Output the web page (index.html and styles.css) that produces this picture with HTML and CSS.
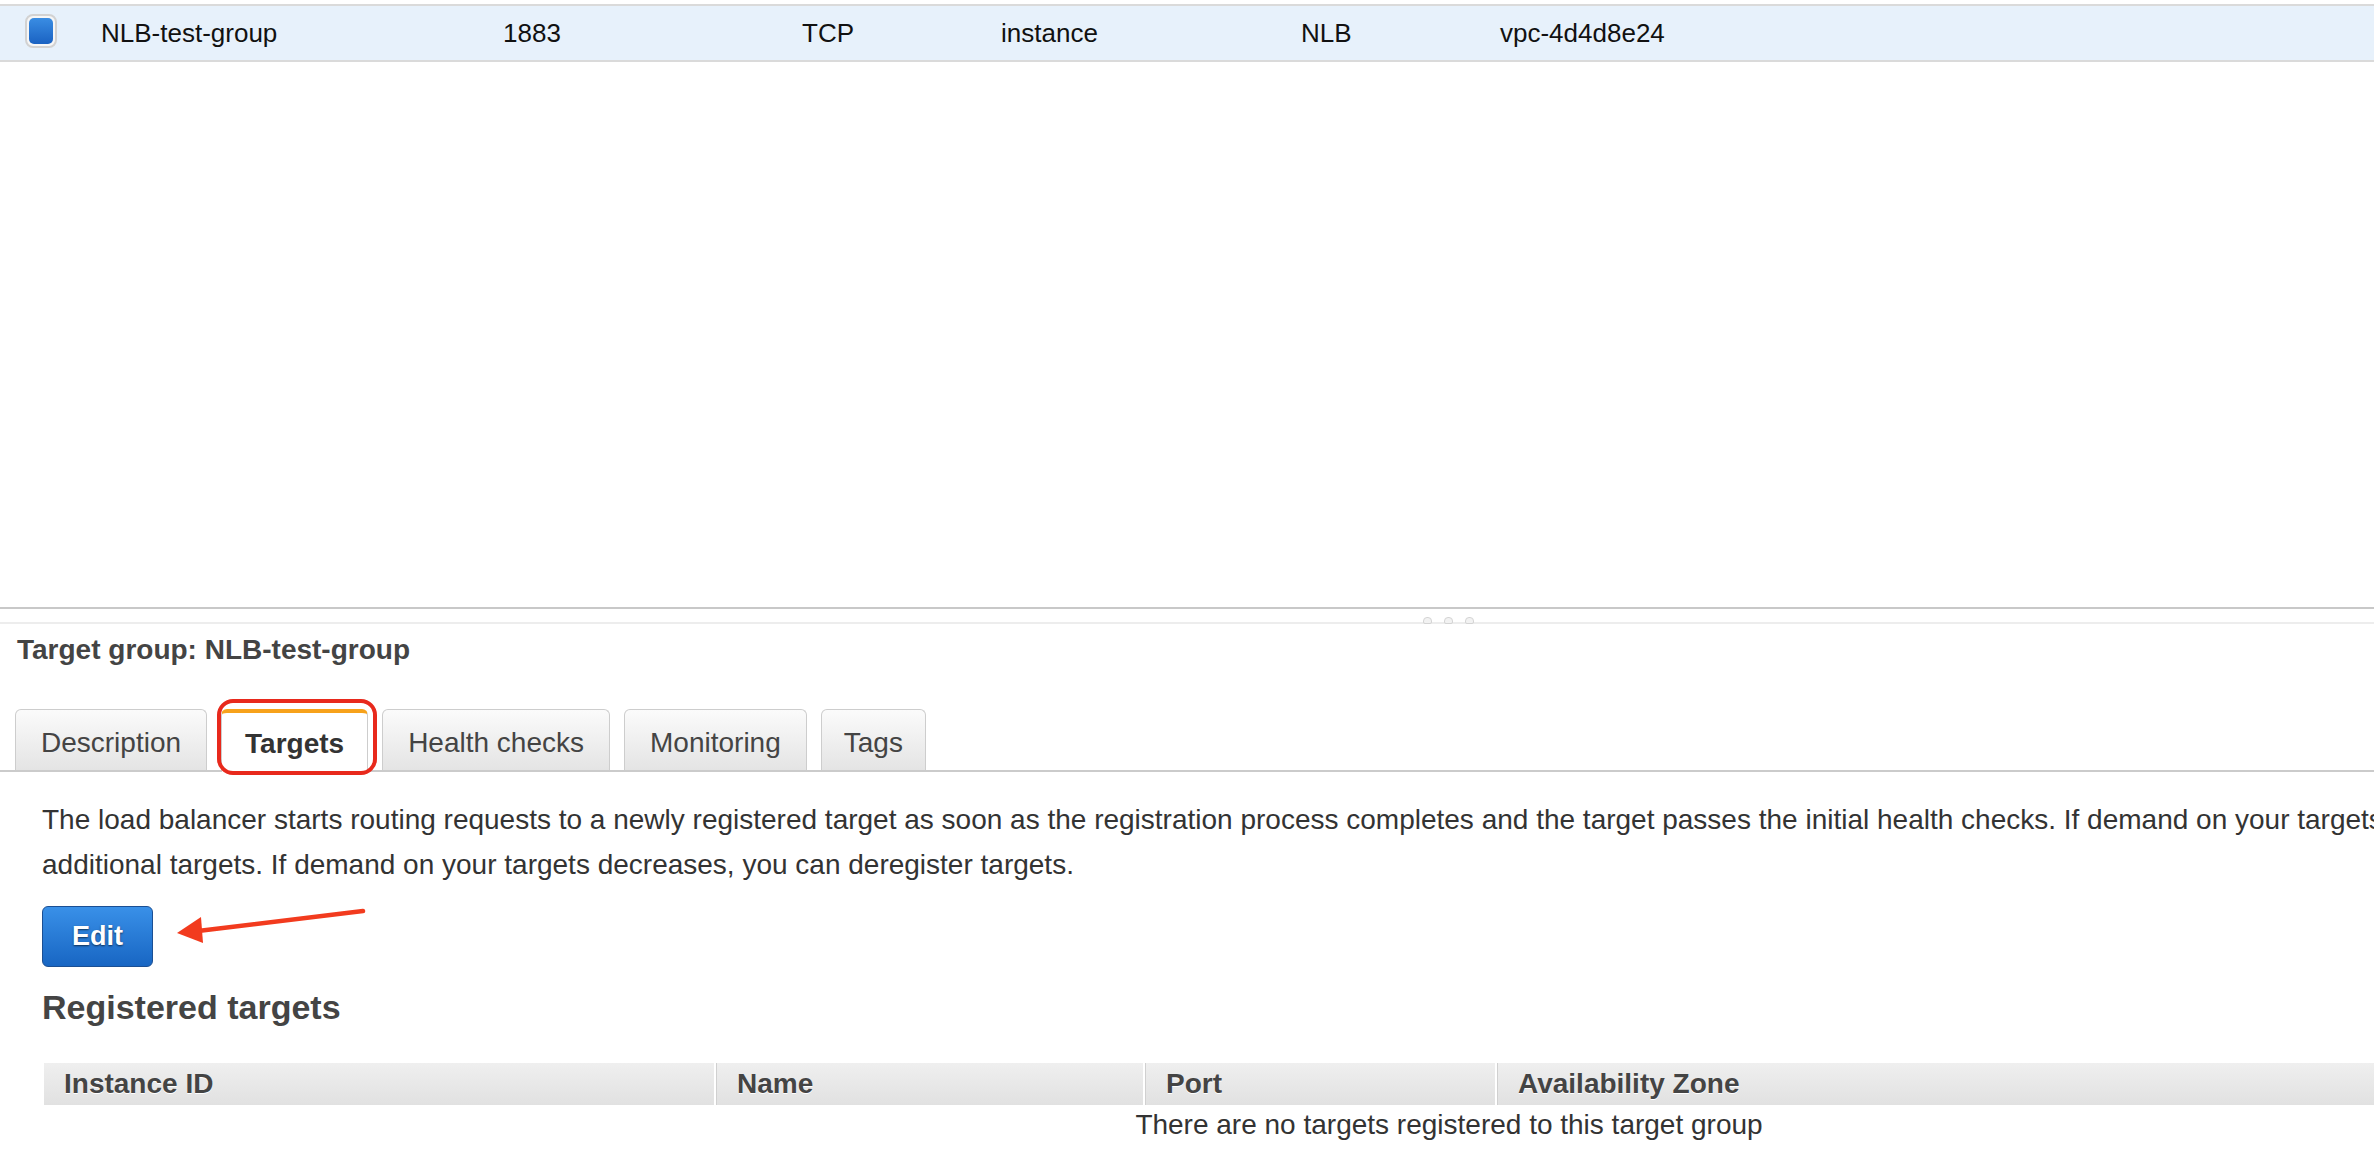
FILE: index.html
```html
<html lang="en">
<head>
  <meta charset="UTF-8">
  <title>Target groups</title>
  <link rel="stylesheet" href="styles.css">
</head>
<body>
  <div class="page">
    <div class="list">
      <div class="row selected">
        <span class="cell check"><span class="checkbox"><span class="checkbox-fill"></span></span></span>
        <span class="cell">NLB-test-group</span>
        <span class="cell">1883</span>
        <span class="cell">TCP</span>
        <span class="cell">instance</span>
        <span class="cell">NLB</span>
        <span class="cell">vpc-4d4d8e24</span>
      </div>
    </div>

    <div class="splitter">
      <span class="grip"><i></i><i></i><i></i></span>
    </div>

    <div class="details">
      <h3 class="details-title">Target group: NLB-test-group</h3>

      <ul class="tabs">
        <li class="tab">Description</li>
        <li class="tab active">Targets</li>
        <li class="tab">Health checks</li>
        <li class="tab">Monitoring</li>
        <li class="tab">Tags</li>
      </ul>

      <div class="tab-body">
        <p class="intro">The load balancer starts routing requests to a newly registered target as soon as the registration process completes and the target passes the initial health checks. If demand on your targets increases, you can register additional targets. If demand on your targets decreases, you can deregister targets.</p>

        <div class="edit-row">
          <button class="btn-primary">Edit</button>
          <svg class="arrow" width="200" height="50" viewBox="0 0 200 50">
            <line x1="193" y1="11" x2="28" y2="31" stroke="#f23b1e" stroke-width="4.5" stroke-linecap="round"/>
            <polygon points="7,33 31,17 33,43" fill="#f23b1e"/>
          </svg>
        </div>

        <h2 class="section-title">Registered targets</h2>

        <table class="targets">
          <thead>
            <tr>
              <th class="col-id">Instance ID</th>
              <th class="col-name">Name</th>
              <th class="col-port">Port</th>
              <th>Availability Zone</th>
            </tr>
          </thead>
          <tbody>
            <tr>
              <td class="empty" colspan="4">There are no targets registered to this target group</td>
            </tr>
          </tbody>
        </table>
      </div>
    </div>
  </div>
</body>
</html>
```

FILE: styles.css
```css
html, body {
  margin: 0;
  overflow: hidden;
  background: #fff;
}
body {
  font-family: "Liberation Sans", Arial, Helvetica, sans-serif;
  color: #333;
}
.page {
  width: 2897px;
}

/* top list */
.list {
  height: 607px;
  padding-top: 4px;
  box-sizing: border-box;
}
.row {
  display: grid;
  grid-template-columns: 101px 402px 299px 199px 300px 199px 1fr;
  align-items: center;
  height: 54px;
  border-top: 2px solid #dadada;
  border-bottom: 2px solid #dadada;
  font-size: 26px;
  color: #111;
}
.row.selected {
  background: #e7f1fb;
}
.cell.check {
  padding-left: 25px;
}
.checkbox {
  display: block;
  width: 32px;
  height: 34px;
  box-sizing: border-box;
  padding: 2px;
  margin-bottom: 4px;
  border: 2px solid #d2d2d2;
  border-radius: 8px;
  background: #f6f6f6;
}
.checkbox-fill {
  display: block;
  height: 100%;
  border-radius: 5px;
  background: linear-gradient(#3a8de3, #1a62c2);
}

/* splitter */
.splitter {
  display: flex;
  justify-content: center;
  align-items: flex-end;
  height: 13px;
  border-top: 2px solid #c8c8c8;
  border-bottom: 2px solid #ededed;
}
.grip {
  display: flex;
  gap: 12px;
  margin-bottom: -2px;
}
.grip i {
  width: 9px;
  height: 7px;
  box-sizing: border-box;
  border: 1px solid #d4d4d4;
  border-radius: 4px 4px 2px 2px;
  background: #f2f2f2;
}

/* details pane */
.details-title {
  margin: 10px 0 0 17px;
  font-size: 28px;
  line-height: 32px;
  font-weight: bold;
  color: #444;
}
.tabs {
  display: flex;
  gap: 14px;
  margin: 43px 0 0;
  padding: 0 0 0 15px;
  list-style: none;
  height: 61px;
  border-bottom: 2px solid #cbcbcb;
}
.tab {
  position: relative;
  display: flex;
  align-items: center;
  box-sizing: border-box;
  height: 61px;
  padding: 6px 25px 0;
  border: 1px solid #cdcdcd;
  border-bottom: none;
  border-radius: 6px 6px 0 0;
  background: linear-gradient(#fbfbfb, #e4e4e4);
  font-size: 28px;
  color: #444;
}
.tab:last-child {
  padding: 6px 22px 0;
}
.tab.active {
  height: 63px;
  margin-bottom: -2px;
  border-top: 4px solid #f7a21b;
  padding: 2px 23px 0;
  background: #fff;
  font-weight: bold;
  color: #333;
}
.tab.active::after {
  content: "";
  position: absolute;
  left: -5px;
  right: -10px;
  top: -14px;
  bottom: -3px;
  border: 4px solid #e8291c;
  border-radius: 16px;
}

.tab-body {
  padding-left: 42px;
}
.intro {
  width: 2760px;
  margin: 25px 0 0;
  font-size: 28px;
  line-height: 45px;
  color: #333;
}
.edit-row {
  position: relative;
  display: flex;
  margin-top: 19px;
}
.btn-primary {
  height: 61px;
  padding: 0 29px;
  border: 1px solid #1b4f93;
  border-radius: 6px;
  background: linear-gradient(#3990e8, #1866c3);
  font-family: inherit;
  font-size: 27px;
  font-weight: bold;
  color: #fff;
  text-shadow: 0 1px 2px rgba(0, 0, 0, 0.6);
  cursor: pointer;
}
.arrow {
  position: absolute;
  left: 128px;
  top: -6px;
}
.section-title {
  margin: 20px 0 0;
  font-size: 34px;
  line-height: 40px;
  font-weight: bold;
  color: #444;
}

/* table */
.targets {
  width: 2810px;
  margin: 36px 0 0 2px;
  border-collapse: collapse;
  table-layout: fixed;
}
.targets th {
  box-sizing: border-box;
  height: 42px;
  padding: 0 0 0 21px;
  text-align: left;
  font-size: 28px;
  font-weight: bold;
  color: #444;
  text-shadow: 0 1px 0 #fff;
  background: linear-gradient(#efefef, #e1e1e1);
  border-left: 2px solid #fff;
  box-shadow: inset 1px 0 0 #d0d0d0;
}
.targets th:first-child {
  border-left: none;
  box-shadow: none;
  padding-left: 20px;
}
.col-id { width: 671px; }
.col-name { width: 429px; }
.col-port { width: 352px; }
.targets td.empty {
  height: 40px;
  padding: 0;
  text-align: center;
  font-size: 28px;
  color: #333;
}
```
